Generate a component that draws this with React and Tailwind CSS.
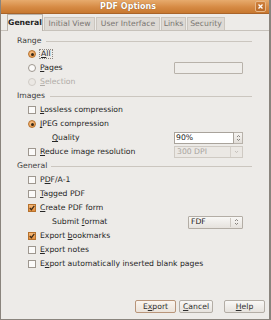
import React from "react";

const U = ({ children }) => <span className="underline underline-offset-[1px]">{children}</span>;

function Radio({ checked, disabled }) {
  if (checked)
    return (
      <span className="w-[8px] h-[8px] rounded-full border border-[#b5712d] bg-[radial-gradient(circle_at_40%_35%,#f8c28a,#e6913f)] flex items-center justify-center shrink-0">
        <span className="w-[3px] h-[3px] rounded-full bg-[#3a2a18]" />
      </span>
    );
  return (
    <span
      className={
        "w-[8px] h-[8px] rounded-full border shrink-0 " +
        (disabled ? "border-[#d0ccc6] bg-[#ebe8e4]" : "border-[#9e978f] bg-[#fbfaf9]")
      }
    />
  );
}

function Check({ checked }) {
  if (checked)
    return (
      <span className="w-[8px] h-[8px] border border-[#b5712d] bg-[linear-gradient(#f6b877,#e38d3c)] flex items-center justify-center shrink-0">
        <svg width="6" height="6" viewBox="0 0 6 6">
          <path d="M0.8 3 L2.4 4.7 L5.3 0.9" fill="none" stroke="#3a2a18" strokeWidth="1.2" />
        </svg>
      </span>
    );
  return <span className="w-[8px] h-[8px] border border-[#9e978f] bg-[#fbfaf9] shrink-0" />;
}

function Header({ label, lineLeft }) {
  return (
    <div className="h-[14px] flex items-center pl-[16px] pr-[17px] text-[#3c3c3c]">
      <span>{label}</span>
      <span className={"flex-1 h-px bg-[#cbc6bf] " + lineLeft} />
    </div>
  );
}

function Row({ children, indent = "pl-[27px]" }) {
  return <div className={"h-[14px] flex items-center pr-[26px] " + indent}>{children}</div>;
}

function UpDown() {
  return (
    <svg width="5" height="8" viewBox="0 0 5 8">
      <path d="M1 3 L2.5 1.5 L4 3 M1 5 L2.5 6.5 L4 5" fill="none" stroke="#6e6a65" strokeWidth="0.8" />
    </svg>
  );
}

export default function App() {
  return (
    <div className="w-[271px] h-[320px] bg-[#edebe8] font-['DejaVu_Sans',sans-serif] text-[7.7px] leading-none text-[#262626] flex flex-col border-l border-r-2 border-b border-[#8a847d] overflow-hidden">
      {/* Title bar */}
      <div className="h-[14px] shrink-0 bg-[linear-gradient(#e7ab6d,#d68a44_55%,#c7782f)] flex items-center relative border-b border-[#a9642a]">
        <div className="flex-1 text-center pr-[14px] font-bold text-[8px] text-white [text-shadow:0_0_1px_#7a4a1c]">
          PDF Options
        </div>
        <div className="absolute right-[3px] top-[1px] w-[11px] h-[11px] rounded-[2px] border border-[#e8b888] bg-[linear-gradient(#d0813c,#b86a28)] flex items-center justify-center">
          <svg width="5" height="5" viewBox="0 0 5 5">
            <path d="M0.5 0.5 L4.5 4.5 M4.5 0.5 L0.5 4.5" stroke="white" strokeWidth="1.3" />
          </svg>
        </div>
      </div>

      {/* Tabs */}
      <div className="h-[17px] shrink-0 flex items-end pl-[6px] border-b border-[#c7c2bb] ">
        <div className="w-[36px] h-[17px] -mb-px border border-b-0 border-[#b9b3ab] bg-[#edebe8] flex items-center justify-center font-bold text-[#222]">
          General
        </div>
        <div className="ml-px w-[51px] h-[13px] border border-b-0 border-[#cbc6bf] bg-[#dedad5] flex items-center justify-center text-[#7a7672]">
          Initial View
        </div>
        <div className="ml-px w-[64px] h-[13px] border border-b-0 border-[#cbc6bf] bg-[#dedad5] flex items-center justify-center text-[#7a7672]">
          User Interface
        </div>
        <div className="ml-px w-[25px] h-[13px] border border-b-0 border-[#cbc6bf] bg-[#dedad5] flex items-center justify-center text-[#7a7672]">
          Links
        </div>
        <div className="ml-px w-[38px] h-[13px] border border-b-0 border-[#cbc6bf] bg-[#dedad5] flex items-center justify-center text-[#7a7672]">
          Security
        </div>
      </div>

      {/* Content */}
      <div className="pt-[4px] flex flex-col">
        <div className="h-[12px] flex items-center pl-[16px] pr-[17px] text-[#3c3c3c]">
          <span>Range</span>
          <span className="flex-1 h-px bg-[#cbc6bf] ml-[5px]" />
        </div>
        <Row>
          <Radio checked />
          <span className="ml-[3px] px-[1px] border border-dotted border-[#8a857f]">
            <U>A</U>ll
          </span>
        </Row>
        <Row>
          <Radio />
          <span className="ml-[4px]">
            <U>P</U>ages
          </span>
          <span className="ml-auto w-[69px] h-[12px] border border-[#b8b2aa] bg-[#efedea] rounded-[1px]" />
        </Row>
        <Row>
          <Radio disabled />
          <span className="ml-[4px] text-[#b0aca7]">
            <U>S</U>election
          </span>
        </Row>
        <Header label="Images" lineLeft="ml-[5px]" />
        <Row>
          <Check />
          <span className="ml-[4px]">
            <U>L</U>ossless compression
          </span>
        </Row>
        <Row>
          <Radio checked />
          <span className="ml-[4px]">
            <U>J</U>PEG compression
          </span>
        </Row>
        <Row indent="pl-[51px]">
          <span>
            <U>Q</U>uality
          </span>
          <span className="ml-auto flex h-[12px]">
            <span className="w-[60px] h-[12px] border border-[#a9a39b] bg-white flex items-center pl-[1px] text-[#222]">
              90%
            </span>
            <span className="w-[9px] h-[12px] border border-l-0 border-[#b8b2aa] bg-[linear-gradient(#f6f4f1,#e2ded9)] flex items-center justify-center">
              <UpDown />
            </span>
          </span>
        </Row>
        <Row>
          <Check />
          <span className="ml-[4px]">
            <U>R</U>educe image resolution
          </span>
          <span className="ml-auto w-[69px] h-[12px] border border-[#cfcac3] bg-[#ebe8e4] flex items-center text-[#a8a49f]">
            <span className="flex-1 pl-[2px]">300 DPI</span>
            <span className="w-[12px] h-full border-l border-[#d6d1cb] flex items-center justify-center">
              <svg width="5" height="4" viewBox="0 0 5 4">
                <path d="M1 1 L2.5 2.6 L4 1" fill="none" stroke="#bdb8b2" strokeWidth="0.8" />
              </svg>
            </span>
          </span>
        </Row>
        <Header label="General" lineLeft="ml-[4px]" />
        <Row>
          <Check />
          <span className="ml-[4px]">
            P<U>D</U>F/A-1
          </span>
        </Row>
        <Row>
          <Check />
          <span className="ml-[4px]">
            <U>T</U>agged PDF
          </span>
        </Row>
        <Row>
          <Check checked />
          <span className="ml-[4px]">
            <U>C</U>reate PDF form
          </span>
        </Row>
        <Row indent="pl-[51px]">
          <span>
            Submit <U>f</U>ormat
          </span>
          <span className="ml-auto w-[55px] h-[13px] border border-[#b3ada5] rounded-[1px] bg-[linear-gradient(#f8f7f5,#e6e2dd)] flex items-center text-[#222]">
            <span className="flex-1 pl-[2px]">FDF</span>
            <span className="w-[12px] h-[9px] border-l border-[#cdc8c1] flex items-center justify-center">
              <UpDown />
            </span>
          </span>
        </Row>
        <Row>
          <Check checked />
          <span className="ml-[4px]">
            Export <U>b</U>ookmarks
          </span>
        </Row>
        <Row>
          <Check />
          <span className="ml-[4px]">
            <U>E</U>xport notes
          </span>
        </Row>
        <Row>
          <Check />
          <span className="ml-[4px]">
            E<U>x</U>port automatically inserted blank pages
          </span>
        </Row>
      </div>

      <div className="flex-1" />

      {/* Buttons */}
      <div className="flex items-center justify-end pr-[4px] pb-[6px]">
        <button className="w-[41px] h-[13px] rounded-[2px] border border-[#b8957a] bg-[linear-gradient(#fbf5ef,#ebe3da)] flex items-center justify-center text-[#2e2e2e]">
          E<U>x</U>port
        </button>
        <button className="ml-[3px] w-[34px] h-[13px] rounded-[2px] border border-[#b3ada5] bg-[linear-gradient(#f9f8f6,#e6e2dd)] flex items-center justify-center text-[#2e2e2e]">
          <U>C</U>ancel
        </button>
        <button className="ml-[11px] w-[41px] h-[13px] rounded-[2px] border border-[#b3ada5] bg-[linear-gradient(#f9f8f6,#e6e2dd)] flex items-center justify-center text-[#2e2e2e]">
          <U>H</U>elp
        </button>
      </div>
    </div>
  );
}
